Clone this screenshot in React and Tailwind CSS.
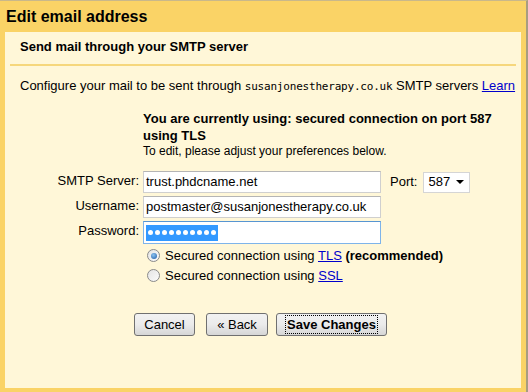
import React from 'react';

const Radio = ({ checked }) => (
  <span className="w-[13px] h-[13px] rounded-full border border-[#8a8a8a] bg-gradient-to-br from-[#e4e4e4] to-[#fbfbfb] flex items-center justify-center shrink-0">
    {checked && <span className="w-[6px] h-[6px] rounded-full bg-[radial-gradient(circle_at_40%_35%,#8cc3f0,#1e5aa8)]" />}
  </span>
);

const Button = ({ children, bold, className = '' }) => (
  <button
    className={`h-[23px] rounded-[3px] border border-[#707070] bg-gradient-to-b from-[#f2f2f2] via-[#ebebeb] to-[#d6d6d6] text-[13px] text-black leading-none flex items-center justify-center ${className}`}
  >
    {bold ? (
      <span className="font-bold border border-dotted border-black px-[1px] py-[2px]">{children}</span>
    ) : (
      children
    )}
  </button>
);

export default function App() {
  return (
    <div className="w-[528px] h-[392px] bg-[#fad366] border-t border-t-[#c9b88a] border-r-2 border-r-[#a89d80] flex flex-col font-['Liberation_Sans',Arial,sans-serif] text-black overflow-hidden">
      {/* Header */}
      <div className="h-[31px] flex items-center pl-[6px] pt-[1px] text-[16px] font-bold">Edit email address</div>

      {/* Panel */}
      <div className="flex-1 mx-[5px] mb-[4px] bg-[#fff7d8] flex flex-col">
        <div className="pl-[15px] pt-[7px] text-[13px] font-bold leading-[16px]">Send mail through your SMTP server</div>
        <div className="mx-[5px] mt-[9px] h-[2px] bg-[#f6d77c]" />

        <div className="pl-[15px] mt-[12px] text-[13px] leading-[16px] whitespace-nowrap overflow-hidden flex items-baseline">
          <span>Configure your mail to be sent through&nbsp;</span>
          <span className="font-['DejaVu_Sans_Mono',monospace] text-[11px] tracking-[-0.2px]">susanjonestherapy.co.uk</span>
          <span>&nbsp;SMTP servers&nbsp;</span>
          <a className="text-[#0000cc] underline">Learn</a>
        </div>

        <div className="ml-[138px] mt-[15px] w-[370px]">
          <div className="text-[13px] font-bold leading-[17px]">You are currently using: secured connection on port 587 using TLS</div>
          <div className="text-[12px] leading-[15px]">To edit, please adjust your preferences below.</div>
        </div>

        {/* Form */}
        <div className="mt-[12px] flex flex-col gap-[3px] text-[13px]">
          <div className="flex items-center h-[22px]">
            <label className="w-[135px] text-right pr-[1px] -mt-[3px]">SMTP Server:</label>
            <div className="ml-[3px] w-[238px] h-[22px] bg-white border border-[#cfcfcf] border-t-[#b5b5b5] flex items-center pl-[2px]">trust.phdcname.net</div>
            <span className="ml-[9px]">Port:</span>
            <div className="ml-[6px] w-[47px] h-[21px] bg-white border border-[#d5d5d5] flex items-center justify-between pl-[4px] pr-[5px]">
              <span>587</span>
              <svg width="8" height="4" viewBox="0 0 8 4"><path d="M0 0h8L4 4z" fill="#000" /></svg>
            </div>
          </div>
          <div className="flex items-center h-[22px]">
            <label className="w-[135px] text-right pr-[1px] -mt-[3px]">Username:</label>
            <div className="ml-[3px] w-[238px] h-[22px] bg-white border border-[#cfcfcf] border-t-[#b5b5b5] flex items-center pl-[2px]">postmaster@susanjonestherapy.co.uk</div>
          </div>
          <div className="flex items-center h-[23px]">
            <label className="w-[135px] text-right pr-[1px] -mt-[3px]">Password:</label>
            <div className="ml-[3px] w-[238px] h-[23px] bg-white border border-[#7eb4ea] border-t-[#5795d2] flex items-center pl-[2px]">
              <span className="h-[16px] bg-[#3399ff] flex items-center gap-[2px] px-[2px]">
                {Array.from({ length: 10 }).map((_, i) => (
                  <span key={i} className="w-[5px] h-[5px] rounded-full bg-white" />
                ))}
              </span>
            </div>
          </div>
        </div>

        <div className="ml-[142px] mt-[5px] flex flex-col gap-[7px] text-[13px] leading-[13px]">
          <div className="flex items-center gap-[5px]">
            <Radio checked />
            <span>
              Secured connection using <a className="text-[#0000cc] underline">TLS</a> <b>(recommended)</b>
            </span>
          </div>
          <div className="flex items-center gap-[5px]">
            <Radio />
            <span>
              Secured connection using <a className="text-[#0000cc] underline">SSL</a>
            </span>
          </div>
        </div>

        <div className="mt-[31px] flex items-center pl-[129px]">
          <Button className="w-[61px]">Cancel</Button>
          <Button className="w-[62px] ml-[11px]">« Back</Button>
          <Button bold className="w-[111px] ml-[8px]">Save Changes</Button>
        </div>
      </div>
    </div>
  );
}
